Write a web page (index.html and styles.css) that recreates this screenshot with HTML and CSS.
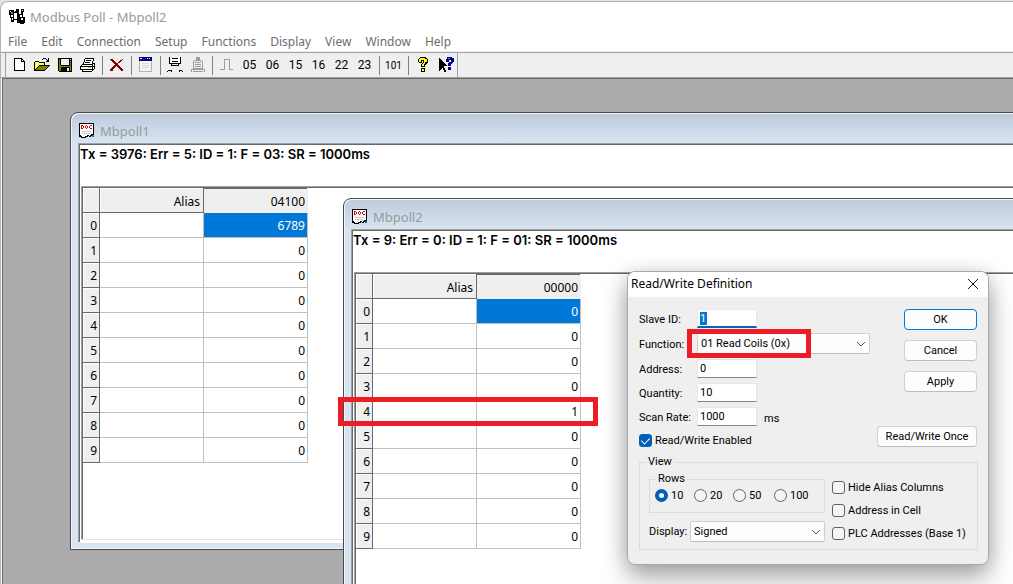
FILE: index.html
```html
<!DOCTYPE html>
<html lang="en">
<head>
    <meta charset="UTF-8">
    <meta name="viewport" content="width=device-width, initial-scale=1.0">
    <title>Modbus Poll - Mbpoll2</title>
    <link rel="stylesheet" href="styles.css">
</head>
<body>
    <svg width="0" height="0" class="defs">
        <symbol id="doc" viewBox="0 0 16 16">
            <path d="M1 1h13v11h-2v1H9v1H6v1H2v-2H1z" fill="#fff"/>
            <path d="M0 0h15v1H0zM0 0h1v13H0zM14 0h1v12h-1zM0 12h2v2H0zM2 13h1v2H2zM3 14h4v1H3zM6 13h3v1H6zM8 12h2v1H8zM10 13h2v1h-2zM11 12h2v1h-2zM12 11h3v1h-3z" fill="#000"/>
            <path d="M3 8h9v1H3zM3 10h8v1H3z" fill="#c8c8c8"/>
            <path d="M13 12h2v2h-2z" fill="#008080"/>
            <path d="M2 2h2v1H2zM2 2h1v4H2zM2 5h2v1H2zM4 3h1v2H4zM7 2h1v1H7zM6 3h1v2H6zM8 3h1v2H8zM7 5h1v1H7zM11 2h2v1h-2zM10 3h1v2h-1zM11 5h2v1h-2z" fill="#e80000"/>
        </symbol>
    </svg>

    <div class="app">
        <header class="titlebar">
            <svg class="app-icon" width="16" height="16" viewBox="0 0 16 16">
                <path d="M0 1h5v5H0zM5 3h2v1H5zM7 0h3v2H7zM6 2h2v2H6zM8 2h2v10H8zM1 6h1v3H1zM4 6h1v3H4zM2 8h3v5H2zM5 10h3v1H5zM8 12h3v2H8zM12 0h3v3h-3zM12 3h2v3h-2zM10 5h3v1h-3zM10 6h1v8h-1zM13 6h1v2h-1zM11 8h5v6h-5zM11 14h4v1h-4z" fill="#000"/>
                <path d="M1 2h1v1H1zM13 1h1v1h-1zM12 9h2v2h-2zM3 9h1v2H3z" fill="#fff"/>
                <path d="M2 3h2v2H2z" fill="#808080"/>
            </svg>
            <span>Modbus Poll - Mbpoll2</span>
        </header>

        <nav class="menubar">
            <button type="button">File</button>
            <button type="button">Edit</button>
            <button type="button">Connection</button>
            <button type="button">Setup</button>
            <button type="button">Functions</button>
            <button type="button">Display</button>
            <button type="button">View</button>
            <button type="button">Window</button>
            <button type="button">Help</button>
        </nav>

        <div class="toolbar">
            <div class="tools">
                <button type="button" aria-label="New">
                    <svg width="16" height="16" viewBox="0 0 16 16">
                        <path d="M4 2h7l3 3v9H4z" fill="#fff"/>
                        <path d="M3 1h8v1H3zM3 1h1v13H3zM3 13h11v1H3zM13 5h1v9h-1zM10 1h1v4h-1zM10 4h4v1h-4zM11 2h1v1h-1zM12 3h1v1h-1z" fill="#000"/>
                    </svg>
                </button>
                <button type="button" aria-label="Open">
                    <svg width="16" height="16" viewBox="0 0 16 16">
                        <path d="M1 5h4v1h6v3H5l-4 4z" fill="#ffff66"/>
                        <path d="M5 9h10l-4 4H1z" fill="#808000"/>
                        <path d="M1 4h4v1H1zM0 5h1v9H0zM5 5h6v1H5zM10 6h1v2h-1zM5 8h11v1H5zM4 9h1v1H4zM3 10h1v1H3zM2 11h1v1H2zM1 12h1v1H1zM0 13h11v1H0zM14 9h1v1h-1zM13 10h1v1h-1zM12 11h1v1h-1zM11 12h1v1h-1zM9 1h3v1H9zM8 2h1v1H8zM12 2h1v1h-1zM13 3h1v1h-1zM14 1h1v4h-1zM12 4h3v1h-3z" fill="#000"/>
                    </svg>
                </button>
                <button type="button" aria-label="Save">
                    <svg width="16" height="16" viewBox="0 0 16 16">
                        <path d="M1 1h14v14H2l-1-1z" fill="#000"/>
                        <path d="M2 2h1v12H2zM3 9h10v1H3zM13 4h1v10h-1zM3 8h1v6H3z" fill="#808000"/>
                        <path d="M4 2h8v6H4zM13 2h1v1h-1zM10 11h2v3h-2z" fill="#efefef"/>
                    </svg>
                </button>
                <button type="button" aria-label="Print">
                    <svg width="16" height="16" viewBox="0 0 16 16">
                        <path d="M5 2h9l-2 5h2v5l-2 2H2v-6l2-1z" fill="#fff"/>
                        <path d="M5 1h9v1H5zM4 2h1v3H4zM13 2h1v2h-1zM12 4h1v3h-1zM3 5h1v2H3zM6 3h5v1H6zM5 5h5v1H5zM2 7h11v1H2zM1 8h1v1H1zM0 9h13v1H0zM0 9h1v4H0zM12 8h1v6h-1zM13 6h2v1h-2zM14 7h1v5h-1zM13 12h1v1h-1zM1 12h11v1H1zM2 13h1v2H2zM2 14h10v1H2zM13 9h1v1h-1z" fill="#000"/>
                        <path d="M8 10h3v1H8z" fill="#d6c800"/>
                    </svg>
                </button>
                <span class="sep"></span>
                <button type="button" aria-label="Delete">
                    <svg width="16" height="16" viewBox="0 0 16 16">
                        <path d="M1 2h3v1H1zM2 3h3v1H2zM3 4h3v1H3zM4 5h3v1H4zM5 6h4v1H5zM6 7h3v1H6zM5 8h5v1H5zM4 9h3v1H4zM8 9h3v1H8zM3 10h3v1H3zM9 10h3v1H9zM2 11h3v1H2zM10 11h3v1h-3zM1 12h3v2H1zM11 12h3v1h-3zM13 2h1v1h-1zM11 3h2v1h-2zM10 4h2v1h-2zM9 5h2v1H9zM12 13h2v1h-2z" fill="#800000"/>
                    </svg>
                </button>
                <span class="sep"></span>
                <button type="button" aria-label="Definition">
                    <svg width="16" height="16" viewBox="0 0 16 16">
                        <path d="M1 1h13v14H1z" fill="#b4b4b4"/>
                        <path d="M2 4h11v10H2z" fill="#f4f4f4"/>
                        <path d="M1 0h13v4H1z" fill="#000080"/>
                        <path d="M2 1h2v1H2zM9 1h1v1H9zM11 1h1v1h-1z" fill="#fff"/>
                        <path d="M4 6h7v1H4zM4 8h7v1H4zM4 10h7v1H4z" fill="#d8d8d8"/>
                    </svg>
                </button>
                <span class="sep"></span>
                <button type="button" aria-label="Connect">
                    <svg width="16" height="16" viewBox="0 0 16 16">
                        <path d="M4 1h9v5H4z" fill="#fff"/>
                        <path d="M2 0h1v7H2zM13 0h1v7h-1zM5 1h6v1H5zM5 4h6v1H5zM2 6h12v1H2zM4 8h8v1H4zM4 7h1v2H4zM11 7h1v2h-1zM1 13h4v1H1zM0 14h1v1H0zM4 14h1v1H4zM12 13h3v1h-3zM12 14h1v1h-1zM15 14h1v1h-1z" fill="#000"/>
                    </svg>
                </button>
                <button type="button" aria-label="Disconnect" disabled>
                    <svg width="16" height="16" viewBox="0 0 16 16">
                        <path d="M6 0h4v3H6zM4 3h8v1H4zM3 4h1v7H3zM12 4h1v7h-1zM5 5h6v1H5zM5 7h6v1H5zM5 9h6v1H5zM3 11h10v1H3zM1 12h14v1H1zM1 13h1v2H1zM14 13h1v2h-1zM3 14h10v1H3z" fill="#9c9c9c"/>
                    </svg>
                </button>
                <span class="sep"></span>
                <button type="button" aria-label="Pulse" disabled>
                    <svg width="16" height="16" viewBox="0 0 16 16">
                        <path d="M1 12h5v1H1zM5 2h1v10H5zM5 2h5v1H5zM10 2h1v11h-1zM10 12h4v1h-4z" fill="#9c9c9c"/>
                    </svg>
                </button>
                <button type="button">05</button>
                <button type="button">06</button>
                <button type="button">15</button>
                <button type="button">16</button>
                <button type="button">22</button>
                <button type="button">23</button>
                <span class="sep"></span>
                <button type="button" class="small">101</button>
                <span class="sep"></span>
                <button type="button" aria-label="About">
                    <svg width="16" height="16" viewBox="0 0 16 16">
                        <path d="M5 0h6v1h1v1h1v4h-1v1h-1v1h-1v2H6V7h1V6h1V4H7v2H4V5H3V2h1V1h1zM6 11h4v4H6z" fill="#000"/>
                        <path d="M5 1h5v1h2v3h-2v2H9v2H7V7h1V6h1V3H6v2H4V2h1zM7 12h2v2H7z" fill="#ffff00"/>
                    </svg>
                </button>
                <button type="button" aria-label="Context help">
                    <svg width="16" height="16" viewBox="0 0 16 16">
                        <path d="M1 1h1v1h1v1h1v1h1v1h1v1h1v1h1v1h1v1H6v2h1v2h1v2H6v-2H5v-2H4v1H3v1H2v1H1z" fill="#000"/>
                        <path d="M9 0h5v1h2v4h-1v1h-1v1h-1v2h-3V6h1V5h2V3h-2v2H8V2h1zM10 10h3v3h-3z" fill="#000080"/>
                        <path d="M10 1h2v1h-2z" fill="#7878e0"/>
                    </svg>
                </button>
            </div>
        </div>

        <main class="desktop">
            <section class="child child-one">
                <h2 class="child-title"><svg width="16" height="16"><use href="#doc"/></svg>Mbpoll1</h2>
                <div class="client">
                    <p class="status">Tx = 3976: Err = 5: ID = 1: F = 03: SR = 1000ms</p>
                    <div class="grid">
                        <table>
                            <thead>
                                <tr><th></th><th>Alias</th><th class="current">04100</th></tr>
                            </thead>
                            <tbody>
                                <tr><th>0</th><td></td><td class="selected">6789</td></tr>
                                <tr><th>1</th><td></td><td>0</td></tr>
                                <tr><th>2</th><td></td><td>0</td></tr>
                                <tr><th>3</th><td></td><td>0</td></tr>
                                <tr><th>4</th><td></td><td>0</td></tr>
                                <tr><th>5</th><td></td><td>0</td></tr>
                                <tr><th>6</th><td></td><td>0</td></tr>
                                <tr><th>7</th><td></td><td>0</td></tr>
                                <tr><th>8</th><td></td><td>0</td></tr>
                                <tr><th>9</th><td></td><td>0</td></tr>
                            </tbody>
                        </table>
                    </div>
                </div>
            </section>

            <section class="child child-two">
                <h2 class="child-title"><svg width="16" height="16"><use href="#doc"/></svg>Mbpoll2</h2>
                <div class="client">
                    <p class="status">Tx = 9: Err = 0: ID = 1: F = 01: SR = 1000ms</p>
                    <div class="grid">
                        <table>
                            <thead>
                                <tr><th></th><th>Alias</th><th class="current">00000</th></tr>
                            </thead>
                            <tbody>
                                <tr><th>0</th><td></td><td class="selected">0</td></tr>
                                <tr><th>1</th><td></td><td>0</td></tr>
                                <tr><th>2</th><td></td><td>0</td></tr>
                                <tr><th>3</th><td></td><td>0</td></tr>
                                <tr><th>4</th><td></td><td>1</td></tr>
                                <tr><th>5</th><td></td><td>0</td></tr>
                                <tr><th>6</th><td></td><td>0</td></tr>
                                <tr><th>7</th><td></td><td>0</td></tr>
                                <tr><th>8</th><td></td><td>0</td></tr>
                                <tr><th>9</th><td></td><td>0</td></tr>
                            </tbody>
                        </table>
                    </div>
                </div>
                <div class="mark mark-row"></div>
            </section>
        </main>
    </div>

    <form class="dialog">
        <div class="dialog-title">
            <span>Read/Write Definition</span>
            <button type="button" class="close" aria-label="Close">
                <svg width="12" height="12" viewBox="0 0 12 12"><path d="M1 1l10 10M11 1L1 11" stroke="#1a1a1a" fill="none"/></svg>
            </button>
        </div>
        <div class="dialog-body">
            <div class="top">
                <div class="fields">
                    <div class="field">
                        <label for="slave">Slave ID:</label>
                        <div class="focused"><input type="text" id="slave" value="1"></div>
                    </div>
                    <div class="field">
                        <label for="function">Function:</label>
                        <div class="select wide">
                            <select id="function"><option>01 Read Coils (0x)</option></select>
                            <svg width="10" height="6" viewBox="0 0 10 6"><path d="M1 1l4 4 4-4" stroke="#555" fill="none"/></svg>
                        </div>
                        <div class="mark mark-function"></div>
                    </div>
                    <div class="field">
                        <label for="address">Address:</label>
                        <input type="text" id="address" value="0">
                    </div>
                    <div class="field">
                        <label for="quantity">Quantity:</label>
                        <input type="text" id="quantity" value="10">
                    </div>
                    <div class="field">
                        <label for="rate">Scan Rate:</label>
                        <input type="text" id="rate" value="1000">
                        <span class="unit">ms</span>
                    </div>
                    <label class="check"><input type="checkbox" checked>Read/Write Enabled</label>
                </div>
                <div class="buttons">
                    <button type="submit" class="default">OK</button>
                    <button type="button">Cancel</button>
                    <button type="button">Apply</button>
                    <button type="button" class="once">Read/Write Once</button>
                </div>
            </div>

            <fieldset class="view">
                <legend>View</legend>
                <div class="view-columns">
                    <div class="view-left">
                        <fieldset class="rows">
                            <legend>Rows</legend>
                            <div class="radios">
                                <label><input type="radio" name="rows" checked>10</label>
                                <label><input type="radio" name="rows">20</label>
                                <label><input type="radio" name="rows">50</label>
                                <label><input type="radio" name="rows">100</label>
                            </div>
                        </fieldset>
                        <div class="display">
                            <label for="display">Display:</label>
                            <div class="select">
                                <select id="display"><option>Signed</option></select>
                                <svg width="10" height="6" viewBox="0 0 10 6"><path d="M1 1l4 4 4-4" stroke="#555" fill="none"/></svg>
                            </div>
                        </div>
                    </div>
                    <div class="view-right">
                        <label class="check"><input type="checkbox">Hide Alias Columns</label>
                        <label class="check"><input type="checkbox">Address in Cell</label>
                        <label class="check"><input type="checkbox">PLC Addresses (Base 1)</label>
                    </div>
                </div>
            </fieldset>
        </div>
    </form>
</body>
</html>
```
FILE: styles.css
```css
* {
    box-sizing: border-box;
}
body {
    margin: 0;
    height: 100vh;
    overflow: hidden;
    background: #e4e4e4;
    font-family: "Noto Sans", "Open Sans", sans-serif;
    font-size: 12px;
    display: flex;
    flex-direction: column;
    padding-top: 1px;
}
button, input, select {
    font: inherit;
    color: inherit;
    margin: 0;
}
svg {
    flex: none;
}
.defs {
    position: absolute;
}

/* main window */
.app {
    flex: 1;
    min-height: 0;
    display: flex;
    flex-direction: column;
    background: #fff;
    border-top: 1px solid #b4b4b4;
    border-left: 1px solid #b4b4b4;
    border-top-left-radius: 8px;
    overflow: hidden;
}
.titlebar {
    display: flex;
    align-items: center;
    gap: 5px;
    height: 29px;
    padding-left: 8px;
    color: #999;
    font-size: 13px;
}
.menubar {
    display: flex;
    height: 21px;
    border-bottom: 1px solid #f0f0f0;
}
.menubar button {
    padding: 1px 7px 0;
    border: none;
    background: none;
    color: #6d6d6d;
    line-height: 19px;
}
.toolbar {
    height: 26px;
    padding-left: 4px;
    background: #efefef;
    border-top: 1px solid #a0a0a0;
    border-bottom: 1px solid #a0a0a0;
    display: flex;
}
.tools {
    display: flex;
    align-items: center;
    padding-left: 1px;
    border-left: 1px solid #a0a0a0;
    border-right: 1px solid #a0a0a0;
}
.tools button {
    width: 23px;
    height: 22px;
    padding: 0;
    border: none;
    background: none;
    font-family: Roboto, sans-serif;
    color: #000;
    display: flex;
    align-items: center;
    justify-content: center;
}
.tools button.small {
    font-size: 10px;
}
.sep {
    width: 6px;
    height: 19px;
    background: linear-gradient(#808080, #808080) center / 1px 100% no-repeat;
}
.tools svg, .child-title svg, .app-icon {
    shape-rendering: crispEdges;
}
.desktop {
    flex: 1;
    min-height: 0;
    margin-left: 1px;
    background: #ababab;
    border-top: 1px solid #696969;
    border-left: 1px solid #696969;
    position: relative;
}

/* child windows */
.child {
    position: absolute;
    right: -20px;
    display: flex;
    flex-direction: column;
    padding: 0 6px 6px;
    background: #d7e4f2;
    border: 1px solid #4a4a4a;
    border-top-left-radius: 8px;
    box-shadow: inset 1px 1px #f4f7fa, inset 0 -1px #f4f7fa;
}
.child-one {
    left: 67px;
    top: 33px;
    height: 438px;
}
.child-two {
    left: 340px;
    top: 119px;
    height: 438px;
}
.child-title {
    display: flex;
    align-items: center;
    gap: 5px;
    height: 29px;
    margin: 1px -5px 0;
    padding: 5px 0 0 7px;
    border-top-left-radius: 7px;
    background: linear-gradient(#bfcbdb, #d7e4f2);
    color: #999;
    font-size: 13px;
    font-weight: normal;
}
.client {
    flex: 1;
    display: flex;
    flex-direction: column;
    margin-left: 1px;
    background: #fff;
    border: 1px solid #a0a0a0;
    border-bottom-color: #fff;
    box-shadow: inset 1px 1px #696969;
}
.status {
    height: 42px;
    margin: 0;
    padding: 2px 0 0 1px;
    font: 600 13px/16px Inter, sans-serif;
}
.grid {
    flex: 1;
    margin: 0 2px 2px;
    padding: 1px 0 0 1px;
    border: 1px solid #a0a0a0;
    border-bottom-color: #e3e3e3;
    box-shadow: inset 1px 1px #696969;
}
table {
    width: 225px;
    table-layout: fixed;
    border-collapse: separate;
    border-spacing: 0;
    font-size: 12px;
}
th, td {
    width: 104px;
    height: 25px;
    padding: 2px 2px 0;
    text-align: right;
    font-weight: normal;
    line-height: 16px;
    border-right: 1px solid #c0c0c0;
    border-bottom: 1px solid #c0c0c0;
}
th {
    background: #efefef;
    border-color: #696969;
    box-shadow: inset 1px 1px #fff;
}
thead th {
    padding: 4px 3px 0;
}
th:first-child {
    width: 17px;
}
th.current {
    padding-right: 2px;
    border-right-color: #efefef;
    border-bottom-color: #efefef;
    box-shadow: inset 0 1px #696969;
}
.selected {
    background: #0078d7;
    color: #fff;
}

/* red highlight frames */
.mark {
    position: absolute;
    border: 5px solid #ee1c24;
    pointer-events: none;
}
.mark-row {
    left: -6px;
    top: 198px;
    width: 260px;
    height: 29px;
}
.mark-function {
    left: 48px;
    top: -4px;
    width: 124px;
    height: 29px;
}

/* dialog */
.dialog {
    position: absolute;
    left: 627px;
    top: 271px;
    width: 362px;
    background: #efefef;
    border: 1px solid #a8a8a8;
    border-radius: 8px;
    box-shadow: 0 12px 26px rgba(0, 0, 0, 0.35), 0 0 18px rgba(0, 0, 0, 0.1);
    font-family: Roboto, sans-serif;
    font-size: 11px;
    overflow: hidden;
}
.dialog-title {
    display: flex;
    align-items: center;
    justify-content: space-between;
    height: 25px;
    padding: 0 9px 2px 3px;
    background: #fff;
    font-family: "Noto Sans", "Open Sans", sans-serif;
    font-size: 12px;
}
.close {
    display: flex;
    padding: 0;
    border: none;
    background: none;
}
.dialog-body {
    padding: 12px 10px 14px 11px;
}
.top {
    display: flex;
    justify-content: space-between;
    padding-right: 1px;
}
.fields {
    display: flex;
    flex-direction: column;
    gap: 5px;
}
.field {
    position: relative;
    display: flex;
    align-items: center;
}
.field label {
    width: 58px;
    padding-top: 2px;
    white-space: nowrap;
}
.field input {
    display: block;
    width: 60px;
    height: 19px;
    padding: 0 2px;
    background: #fff;
    border: 1px solid #e6e6e6;
    border-bottom-color: #868686;
    outline: none;
}
.focused input {
    border-bottom: 2px solid #0067c0;
    background: linear-gradient(#0078d7, #0078d7) 2px 2px / 7px 13px no-repeat #fff;
    color: #fff;
}
.unit {
    margin-left: 7px;
    padding-top: 3px;
}
.select {
    position: relative;
    width: 135px;
}
.wide {
    width: 173px;
}
.select select {
    display: block;
    width: 100%;
    height: 21px;
    padding: 0 3px;
    appearance: none;
    background: #fdfdfd;
    border: 1px solid #d0d0d0;
    border-bottom-color: #bcbcbc;
    border-radius: 2px;
}
.select svg {
    position: absolute;
    right: 4px;
    top: 8px;
}
.check {
    display: flex;
    align-items: center;
    gap: 3px;
    height: 14px;
    white-space: nowrap;
}
.fields .check {
    margin-top: 2px;
}
.check input {
    appearance: none;
    width: 13px;
    height: 13px;
    border: 1px solid #626262;
    border-radius: 3px;
    background: #f5f5f5;
    display: flex;
    justify-content: center;
}
.check input:checked {
    background: #005fb8;
    border-color: #005fb8;
}
.check input:checked::before {
    content: "";
    width: 4px;
    height: 7px;
    margin-top: 1px;
    border: solid #fff;
    border-width: 0 1px 1px 0;
    transform: rotate(45deg);
}
.buttons {
    display: flex;
    flex-direction: column;
    align-items: flex-end;
    gap: 10px;
}
.buttons button {
    width: 73px;
    height: 21px;
    padding: 0;
    background: #fdfdfd;
    border: 1px solid #d0d0d0;
    border-bottom-color: #bcbcbc;
    border-radius: 4px;
}
.buttons .default {
    border-color: #0078d4;
}
.buttons .once {
    width: 100px;
    margin-top: 24px;
}
fieldset {
    min-width: 0;
    margin: 0;
    padding: 0;
    border: 1px solid #dcdcdc;
}
legend {
    padding: 0 2px;
    line-height: 14px;
}
.view {
    margin-top: 8px;
    padding: 0 9px 7px;
}
.view legend {
    margin-left: -3px;
}
.view-columns {
    display: flex;
    gap: 7px;
    margin-top: 3px;
}
.view-left {
    width: 176px;
}
.rows {
    padding: 0 0 10px 5px;
}
.rows legend {
    margin-left: 1px;
}
.radios {
    display: grid;
    grid-template-columns: 39px 39px 41px auto;
    margin-top: 3px;
}
.radios label {
    display: flex;
    align-items: center;
    gap: 3px;
    height: 13px;
}
.radios input {
    appearance: none;
    width: 13px;
    height: 13px;
    border: 1px solid #626262;
    border-radius: 50%;
    background: #f5f5f5;
}
.radios input:checked {
    border: 4px solid #005fb8;
    background: #fff;
}
.display {
    display: flex;
    align-items: center;
    justify-content: space-between;
    margin-top: 8px;
}
.view-right {
    display: flex;
    flex-direction: column;
    gap: 9px;
    margin-top: 8px;
}
```
